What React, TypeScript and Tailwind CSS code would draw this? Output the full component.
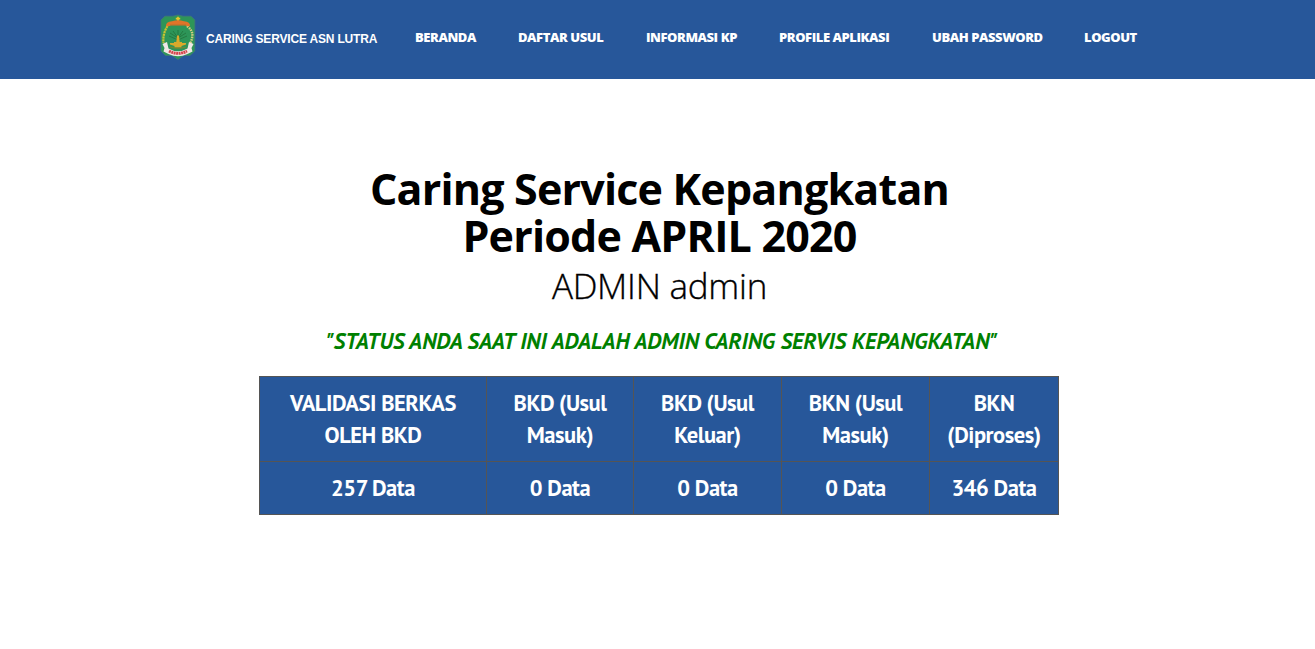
const navItems = [
  { label: "BERANDA", width: "w-[61px]" },
  { label: "DAFTAR USUL", width: "w-[86px]" },
  { label: "INFORMASI KP", width: "w-[91px]" },
  { label: "PROFILE APLIKASI", width: "w-[111px]" },
  { label: "UBAH PASSWORD", width: "w-[110px]" },
  { label: "LOGOUT", width: "w-[54px]" },
];

const columns = [
  { title: "VALIDASI BERKAS OLEH BKD", total: 257, width: "w-[227px]" },
  { title: "BKD (Usul Masuk)", total: 0, width: "w-[147px]" },
  { title: "BKD (Usul Keluar)", total: 0, width: "w-[148px]" },
  { title: "BKN (Usul Masuk)", total: 0, width: "w-[148px]" },
  { title: "BKN (Diproses)", total: 346, width: "w-[129px]" },
];

function Crest() {
  return (
    <svg viewBox="0 0 40 50" className="h-[50px] w-10 shrink-0" aria-hidden="true">
      <path d="M7 4.2H15L20 3L25 4.2H33L36.8 8V39L32 43.5H25.5L20 47.5L14 43.5H7.5L3 39V8Z" fill="#2d9558" stroke="#407b72" strokeWidth=".8" />
      <path d="M9.5 14Q4.5 22 5.5 31" fill="none" stroke="#c8c232" strokeWidth="2.2" strokeDasharray="2.2 .6" />
      <path d="M29 14Q34 18 34.3 22T32.5 31" fill="none" stroke="#d3cc80" strokeWidth="2.4" strokeDasharray="1.6 .9" />
      <path d="M20 4.8V9M17.8 6.6H22.2" stroke="#e9c52b" strokeWidth="1.7" />
      <path d="M8 14Q7.5 10 14 9.2Q20 7.2 26 9.2Q32.5 10 32 14Q29 14.6 27 13.2H13Q11 14.6 8 14Z" fill="#df7429" />
      <path d="M12 13H28" stroke="#b4702d" />
      <path d="M20 31V18M20 26L15 19M20 26L25 19M20 26L12 21M20 26L28 21M20 28L11 24M20 28L29 24" stroke="#24763e" strokeWidth=".9" />
      <path d="M19 23.5H21L21.7 30H24V31H28V32.5L23.5 34V35.5H16.5V34L12 32.5V31H16V30H18.3Z" fill="#d9a92b" />
      <path d="M12 35Q20 37.5 28 35" fill="none" stroke="#7d8530" strokeWidth="1.1" />
      <path d="M4.5 32L9 30L10.5 36.5Q20 42 29.5 36.5L31 30L35.5 32L33.5 36L34.5 39.5L29.5 42Q20 46.5 10.5 42L5.5 39.5L6.5 36Z" fill="#efe7e5" />
      <path d="M11 39Q20 43.8 29 39" fill="none" stroke="#d6434a" strokeWidth="2.9" strokeDasharray="2 .5" />
    </svg>
  );
}

export default function App() {
  return (
    <div className="min-h-screen bg-white font-['Open_Sans',sans-serif] text-black">
      <header className="flex h-[79px] items-start bg-[#27579a] pl-[158px] text-white">
        <div className="flex pt-3">
          <Crest />
          <span className="ml-2 w-[171px] pt-[17px] font-['Liberation_Sans',sans-serif] text-xs leading-5 font-bold tracking-[-0.17px] whitespace-nowrap">CARING SERVICE ASN LUTRA</span>
        </div>
        <nav className="ml-[38px] flex gap-[42px] pt-[27px] text-[13px] leading-5 font-extrabold tracking-[-0.43px] whitespace-nowrap">
          {navItems.map((item) => <a key={item.label} href="#" className={item.width}>{item.label}</a>)}
        </nav>
      </header>
      <main className="flex flex-col items-center pr-px pt-[86px]">
        <h1 className="ml-[5px] text-center text-[43px] leading-[47px] font-bold tracking-[-0.8px]">Caring Service Kepangkatan<br />Periode APRIL 2020</h1>
        <h2 className="ml-[5px] mt-[7px] text-[35px] leading-[40px] font-light tracking-[-0.25px] [-webkit-text-stroke:0.35px_black]">ADMIN admin</h2>
        <p className="ml-[9px] mt-[19px] font-['PT_Sans',sans-serif] text-[22.5px] leading-8 font-bold tracking-[-0.03px] text-[#008000] italic">"STATUS ANDA SAAT INI ADALAH ADMIN CARING SERVIS KEPANGKATAN"</p>
        <table className="mt-[19px] ml-1 w-[800px] table-fixed border-collapse border border-[#555] bg-[#27579a] text-center font-['PT_Sans',sans-serif] text-[22.5px] leading-8 font-bold tracking-[-0.45px] text-white">
          <thead>
            <tr>{columns.map((column) => <th key={column.title} className={`${column.width} border border-[#555] px-4 py-2.5`}>{column.title}</th>)}</tr>
          </thead>
          <tbody>
            <tr>{columns.map((column) => <td key={column.title} className="border border-[#555] py-2.5">{column.total} Data</td>)}</tr>
          </tbody>
        </table>
      </main>
    </div>
  );
}
